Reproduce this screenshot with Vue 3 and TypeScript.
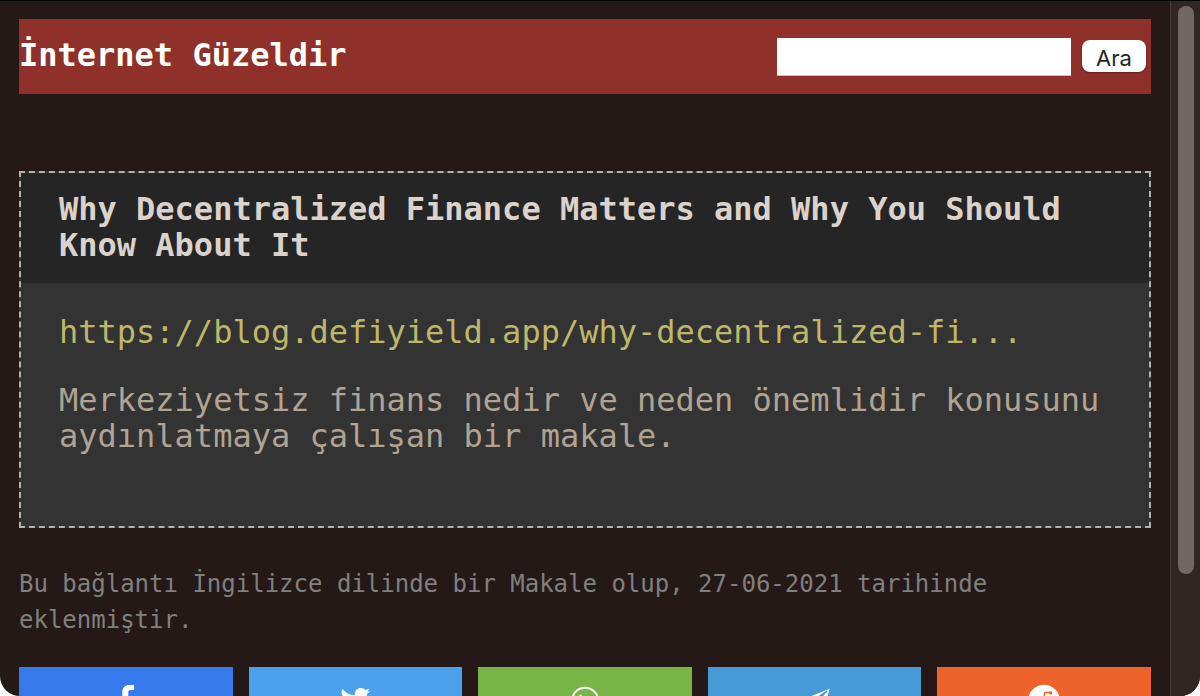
<script setup lang="ts">
interface Share {
  name: string
  label: string
}

const shares: Share[] = [
  { name: 'facebook', label: 'Facebook' },
  { name: 'twitter', label: 'Twitter' },
  { name: 'whatsapp', label: 'WhatsApp' },
  { name: 'telegram', label: 'Telegram' },
  { name: 'reddit', label: 'Reddit' },
]
</script>

<template>
  <div class="window">
    <div class="page">
      <header class="top">
        <h1>İnternet Güzeldir</h1>
        <form class="search" role="search" @submit.prevent>
          <input type="text" aria-label="Ara" />
          <button type="submit">Ara</button>
        </form>
      </header>

      <main>
        <article class="card">
          <h2>Why Decentralized Finance Matters and Why You Should Know About It</h2>
          <div class="body">
            <a href="#">https://blog.defiyield.app/why-decentralized-fi...</a>
            <p>Merkeziyetsiz finans nedir ve neden önemlidir konusunu aydınlatmaya çalışan bir makale.</p>
          </div>
        </article>

        <p class="meta">Bu bağlantı İngilizce dilinde bir Makale olup, 27-06-2021 tarihinde eklenmiştir.</p>

        <nav class="shares">
          <a v-for="s in shares" :key="s.name" href="#" :class="['share', s.name]" :aria-label="s.label">
            <svg viewBox="0 0 24 24" aria-hidden="true">
              <path
                v-if="s.name === 'facebook'"
                d="M17.9 9.6h-4.2V6.4c0-1.3.6-1.9 1.8-1.9h2.6V.7h-3.4C11.2.7 9.2 2.7 9.2 6v3.6H6.3v4h2.9v10h4.5v-10h3.6z"
              />
              <path
                v-else-if="s.name === 'twitter'"
                d="M23.44 5.33c-.8.37-1.5.38-2.22.02.93-.56.98-.96 1.32-2.02-.88.52-1.86.9-2.9 1.1-.82-.88-2-1.43-3.3-1.43-2.5 0-4.55 2.04-4.55 4.54 0 .36.03.7.1 1.04-3.77-.2-7.12-2-9.36-4.75-.4.67-.6 1.45-.6 2.3 0 1.56.8 2.95 2 3.77-.74-.03-1.44-.23-2.05-.57v.06c0 2.2 1.56 4.03 3.64 4.44-.67.2-1.37.2-2.06.08.58 1.8 2.26 3.12 4.25 3.16C5.78 18.6 3.37 19.24 1 18.96c2 1.3 4.4 2.04 6.97 2.04 8.35 0 12.92-6.92 12.92-12.93 0-.2 0-.4-.02-.6.9-.63 1.96-1.22 2.56-2.14z"
              />
              <g v-else-if="s.name === 'whatsapp'">
                <path class="line" d="M2.4 22.4l1.3-4.6A9.8 9.8 0 1 1 7.2 21.2z" />
                <path d="M8.7 7.9c-.7.1-1.6 1-1.6 2.3 0 2.7 4.6 7.2 7.4 7.2 1.4 0 2.4-1 2.3-2.2l-2.3-1.2-1.2 1.3c-1.7-.6-3-1.9-3.7-3.3l.9-1.2-1-2.5z" />
              </g>
              <g v-else-if="s.name === 'telegram'">
                <path d="M22.9 3.5L1.6 12.2l5.6 2.3 2 6.3 3.3-3.4 5.9 4.2z" />
                <path class="crease" d="M7.4 14.6L21 5.2 10.4 16.2l-1.1 4.4" />
              </g>
              <g v-else>
                <circle cx="12" cy="12.6" r="12" />
                <ellipse class="mark" cx="12" cy="14.6" rx="6.6" ry="4.6" />
                <path class="antenna" d="M11.8 10.4l.8-4h4" />
                <circle class="mark" cx="16.9" cy="6.7" r="1.2" />
                <circle cx="9.4" cy="13.6" r="1.2" />
                <circle cx="14.6" cy="13.6" r="1.2" />
              </g>
            </svg>
          </a>
        </nav>
      </main>
    </div>
    <div class="scrollbar" aria-hidden="true"><div class="thumb"></div></div>
  </div>
</template>

<style>
html {
  background: #fff;
}
body {
  margin: 0;
  overflow: hidden;
}
</style>

<style scoped>
.window {
  display: flex;
  box-sizing: border-box;
  height: 100vh;
  overflow: hidden;
  border-top: 1px solid #000;
  border-radius: 0 0 20px 20px;
  background: #241917;
  font-family: "DejaVu Sans Mono", Menlo, monospace;
}
.page {
  flex: 1;
  min-width: 0;
  padding: 18px 19px 0;
}
.top {
  display: flex;
  align-items: flex-start;
  justify-content: space-between;
  padding: 19px 0 18px;
  background: #8f302a;
}
h1 {
  margin: 0;
  color: #fff;
  font-size: 32px;
  line-height: 34px;
}
.search {
  display: flex;
  align-items: center;
  gap: 11px;
  margin-right: 5px;
}
.search input {
  box-sizing: border-box;
  width: 294px;
  height: 38px;
  padding: 4px;
  border: 0;
  border-bottom: 1px solid #c4c0c0;
  border-radius: 0;
  background: #fff;
  font-size: 22px;
}
.search button {
  width: 64px;
  height: 32px;
  margin: 0 0 2px;
  padding: 4px 0 0;
  border: 0;
  border-radius: 8px;
  background: #fff;
  box-shadow: 0 1px 2px rgba(0, 0, 0, 0.35);
  color: #252525;
  font-family: Inter, sans-serif;
  font-size: 22px;
  line-height: 28px;
}
.card {
  margin-top: 77px;
  border: 2px dashed #b5b1af;
  background: #333;
}
h2 {
  margin: 0;
  padding: 18px 38px 20px;
  background: #252525;
  color: #dbd2cb;
  font-size: 32px;
  line-height: 36px;
}
.body {
  padding: 31px 38px 72px;
  font-size: 32px;
  line-height: 36px;
}
.body a {
  display: block;
  color: #bdb76b;
  text-decoration: none;
}
.body p {
  margin: 32px 0 0;
  color: #b0a394;
}
.meta {
  margin: 38px 0 29px;
  color: #808080;
  font-size: 24px;
  line-height: 36px;
}
.shares {
  display: grid;
  grid-template-columns: repeat(5, 1fr);
  gap: 16px;
}
.share {
  display: flex;
  justify-content: center;
  padding: 17px 0;
}
.share svg {
  width: 32px;
  height: 32px;
  fill: #fff;
}
.share .line {
  fill: none;
  stroke: #fff;
  stroke-width: 1.5;
  stroke-linejoin: round;
}
.share .mark {
  fill: #ee622b;
}
.share .antenna {
  fill: none;
  stroke: #ee622b;
  stroke-width: 1;
}
.share .crease {
  fill: none;
  stroke: #469ad8;
  stroke-width: 1;
}
.facebook {
  background: #3579ea;
}
.twitter {
  background: #4aa0eb;
}
.whatsapp {
  background: #78b547;
}
.telegram {
  background: #469ad8;
}
.reddit {
  background: #ee622b;
}
.scrollbar {
  box-sizing: border-box;
  width: 30px;
  padding: 5px 6px 0 7px;
  border-left: 1px solid #443a38;
  background: #302624;
}
.thumb {
  height: 82.3%;
  border-radius: 8px;
  background: #716764;
}
</style>
